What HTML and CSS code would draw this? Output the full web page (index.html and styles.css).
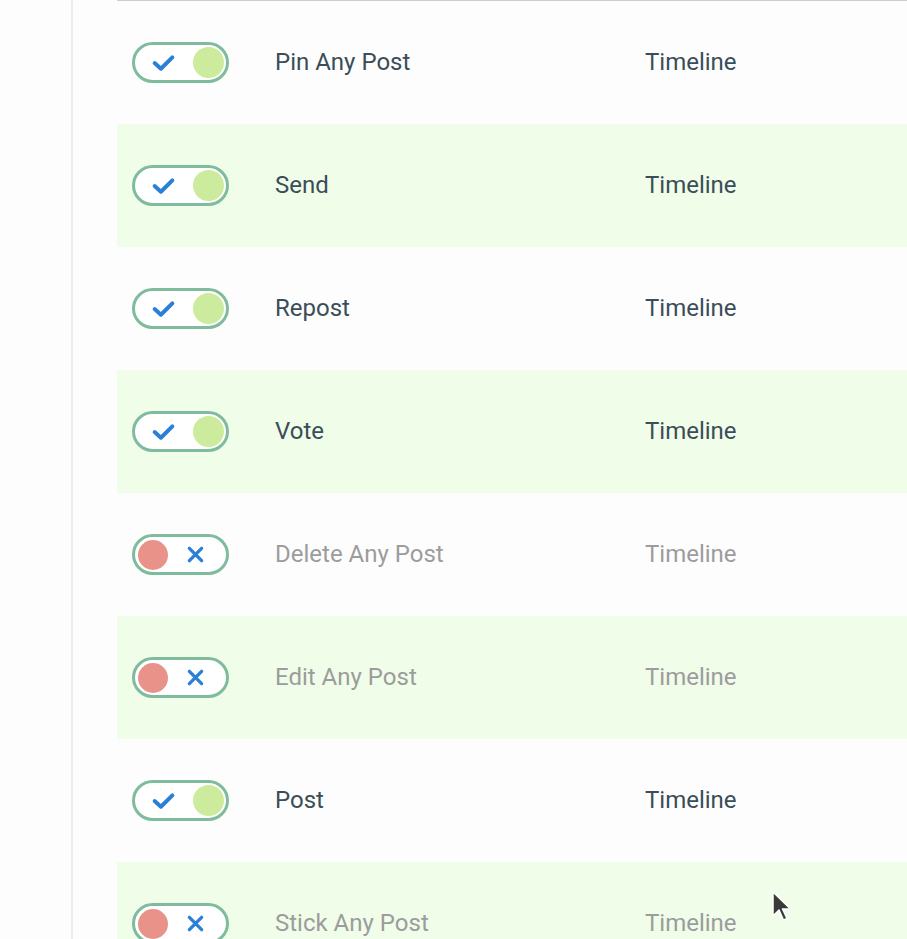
FILE: index.html
```html
<!DOCTYPE html>
<html>
<head>
<meta charset="utf-8">
<link rel="stylesheet" href="styles.css">
</head>
<body>
<div class="page">
  <div class="sidebar"></div>
  <div class="main">
    <div class="table">
      <div class="row">
        <div class="cell-toggle"><span class="toggle on"><svg class="ico" viewBox="0 0 24 24"><path d="M3.5 12.5 L9.5 18 L20.5 7" /></svg><span class="knob"></span></span></div>
        <div class="name">Pin Any Post</div><div class="cat">Timeline</div>
      </div>
      <div class="row alt">
        <div class="cell-toggle"><span class="toggle on"><svg class="ico" viewBox="0 0 24 24"><path d="M3.5 12.5 L9.5 18 L20.5 7" /></svg><span class="knob"></span></span></div>
        <div class="name">Send</div><div class="cat">Timeline</div>
      </div>
      <div class="row">
        <div class="cell-toggle"><span class="toggle on"><svg class="ico" viewBox="0 0 24 24"><path d="M3.5 12.5 L9.5 18 L20.5 7" /></svg><span class="knob"></span></span></div>
        <div class="name">Repost</div><div class="cat">Timeline</div>
      </div>
      <div class="row alt">
        <div class="cell-toggle"><span class="toggle on"><svg class="ico" viewBox="0 0 24 24"><path d="M3.5 12.5 L9.5 18 L20.5 7" /></svg><span class="knob"></span></span></div>
        <div class="name">Vote</div><div class="cat">Timeline</div>
      </div>
      <div class="row off">
        <div class="cell-toggle"><span class="toggle"><span class="knob"></span><svg class="ico" viewBox="0 0 24 24"><path d="M5 5 L19 19 M19 5 L5 19" /></svg></span></div>
        <div class="name">Delete Any Post</div><div class="cat">Timeline</div>
      </div>
      <div class="row alt off">
        <div class="cell-toggle"><span class="toggle"><span class="knob"></span><svg class="ico" viewBox="0 0 24 24"><path d="M5 5 L19 19 M19 5 L5 19" /></svg></span></div>
        <div class="name">Edit Any Post</div><div class="cat">Timeline</div>
      </div>
      <div class="row">
        <div class="cell-toggle"><span class="toggle on"><svg class="ico" viewBox="0 0 24 24"><path d="M3.5 12.5 L9.5 18 L20.5 7" /></svg><span class="knob"></span></span></div>
        <div class="name">Post</div><div class="cat">Timeline</div>
      </div>
      <div class="row alt off">
        <div class="cell-toggle"><span class="toggle"><span class="knob"></span><svg class="ico" viewBox="0 0 24 24"><path d="M5 5 L19 19 M19 5 L5 19" /></svg></span></div>
        <div class="name">Stick Any Post</div><div class="cat">Timeline</div>
      </div>
    </div>
  </div>
</div>
<svg class="cursor" width="24" height="34" viewBox="0 0 24 34"><path d="M2 2 L2 26 L8 20 L12.5 30 L16 28.5 L11.5 19 L19.5 19 Z" fill="#3a3a3a" stroke="#ffffff" stroke-width="1.5" stroke-linejoin="round"/></svg>
</body>
</html>
```
FILE: styles.css
```css
html, body {
  margin: 0;
  padding: 0;
  background: #fdfdfd;
  overflow: hidden;
}
body {
  font-family: Roboto, "Liberation Sans", sans-serif;
  height: 939px;
  position: relative;
}
.page {
  display: flex;
  height: 939px;
}
.sidebar {
  width: 71px;
  flex: none;
  border-right: 2px solid #ececec;
}
.main {
  flex: 1;
  padding-left: 44px;
}
.table {
  border-top: 1px solid #cccccc;
}
.row {
  height: 123px;
  display: flex;
  align-items: center;
}
.row.alt {
  background: #f0fde9;
}
.cell-toggle {
  box-sizing: border-box;
  width: 158px;
  padding-left: 15px;
  flex: none;
  display: flex;
  align-items: center;
}
.toggle {
  box-sizing: border-box;
  width: 97px;
  height: 41px;
  border: 3px solid #7fbc9d;
  border-radius: 21px;
  background: #ffffff;
  display: flex;
  align-items: center;
  justify-content: space-between;
  padding: 0 2px 0 16px;
}
.toggle .knob {
  width: 31px;
  height: 31px;
  border-radius: 50%;
  background: #cdeb9d;
}
.toggle.on .ico {
  width: 25px;
  height: 25px;
}
.ico path {
  fill: none;
  stroke: #2a7fd6;
  stroke-width: 3.8;
  stroke-linecap: round;
  stroke-linejoin: round;
}
.row.off .toggle {
  padding: 0 20px 0 3px;
}
.row.off .knob {
  width: 30px;
  height: 30px;
  background: #e8928a;
}
.row.off .ico {
  width: 21px;
  height: 21px;
}
.row.off .ico path {
  stroke-width: 3.8;
}
.name, .cat {
  font-size: 24px;
  color: #3b4d58;
  padding-bottom: 2px;
}
.name {
  width: 370px;
  flex: none;
}
.row.off .name, .row.off .cat {
  color: #9c9c9c;
}
.cursor {
  position: absolute;
  left: 771px;
  top: 890px;
}
```
